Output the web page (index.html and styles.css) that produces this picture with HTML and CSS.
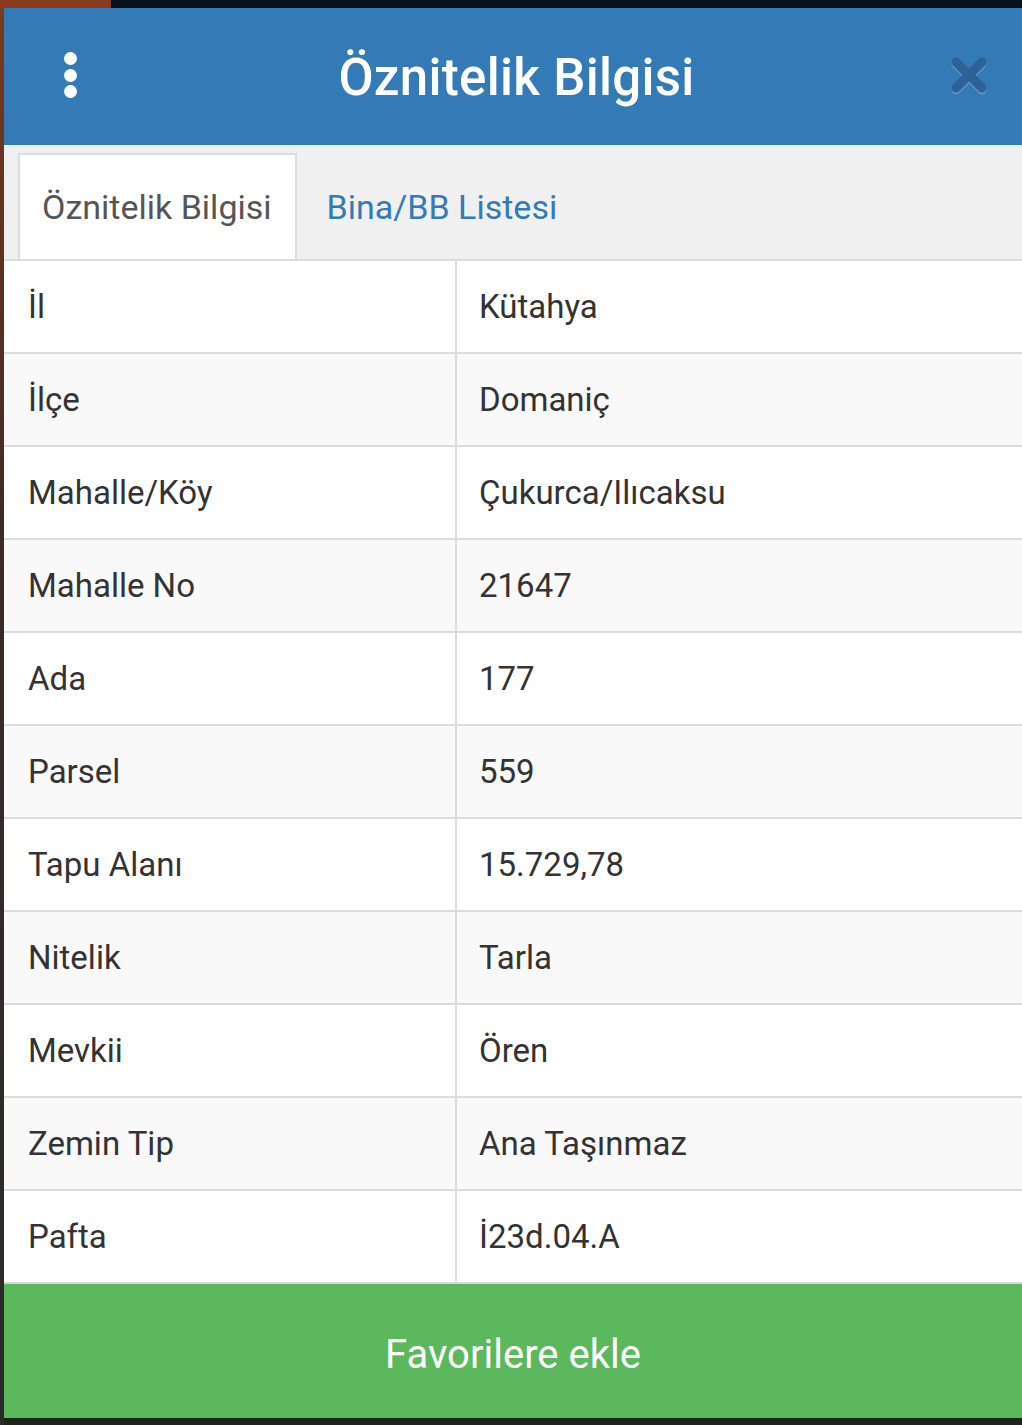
FILE: index.html
```html
<!DOCTYPE html>
<html lang="tr">
<head>
<meta charset="utf-8">
<title>Öznitelik Bilgisi</title>
<link rel="stylesheet" href="styles.css">
</head>
<body>
<div class="page">
  <div class="modal">
    <header class="modal-header">
      <div class="menu-dots"><span></span><span></span><span></span></div>
      <h1 class="modal-title">Öznitelik Bilgisi</h1>
      <svg class="close-icon" viewBox="0 0 40 40" width="40" height="40" aria-hidden="true">
        <g stroke="#5b93c9" stroke-width="9" stroke-linecap="round">
          <line x1="6" y1="8" x2="32" y2="34"/>
          <line x1="32" y1="8" x2="6" y2="34"/>
        </g>
        <g stroke="#2c6297" stroke-width="9" stroke-linecap="round">
          <line x1="6" y1="6" x2="32" y2="32"/>
          <line x1="32" y1="6" x2="6" y2="32"/>
        </g>
      </svg>
    </header>
    <nav class="tabs">
      <div class="tab active">Öznitelik Bilgisi</div>
      <div class="tab">Bina/BB Listesi</div>
    </nav>
    <div class="table">
      <div class="row"><div class="cell key">İl</div><div class="cell val">Kütahya</div></div>
      <div class="row"><div class="cell key">İlçe</div><div class="cell val">Domaniç</div></div>
      <div class="row"><div class="cell key">Mahalle/Köy</div><div class="cell val">Çukurca/Ilıcaksu</div></div>
      <div class="row"><div class="cell key">Mahalle No</div><div class="cell val">21647</div></div>
      <div class="row"><div class="cell key">Ada</div><div class="cell val">177</div></div>
      <div class="row"><div class="cell key">Parsel</div><div class="cell val">559</div></div>
      <div class="row"><div class="cell key">Tapu Alanı</div><div class="cell val">15.729,78</div></div>
      <div class="row"><div class="cell key">Nitelik</div><div class="cell val">Tarla</div></div>
      <div class="row"><div class="cell key">Mevkii</div><div class="cell val">Ören</div></div>
      <div class="row"><div class="cell key">Zemin Tip</div><div class="cell val">Ana Taşınmaz</div></div>
      <div class="row"><div class="cell key">Pafta</div><div class="cell val">İ23d.04.A</div></div>
    </div>
    <div class="footer-btn">Favorilere ekle</div>
  </div>
</div>
</body>
</html>
```
FILE: styles.css
```css
html, body {
  margin: 0;
  padding: 0;
}
body {
  width: 1022px;
  height: 1425px;
  overflow: hidden;
  background:
    linear-gradient(to right, #8b3b1b 0, #8b3b1b 111px, #06121c 111px) top left / 100% 8px no-repeat,
    linear-gradient(to bottom, #7a3a1e 0, #3a2a26 40%, #2a2a2a 100%) left / 4px 100% no-repeat,
    #1d2418;
  font-family: Roboto, "Noto Sans", "Liberation Sans", sans-serif;
}
.page {
  padding: 8px 0 0 4px;
}
.modal {
  width: 1018px;
  background: #fff;
}
.modal-header {
  height: 137px;
  background: #337ab7;
  display: flex;
  align-items: center;
}
.menu-dots {
  display: flex;
  flex-direction: column;
  gap: 3.5px;
  margin-left: 60px;
  margin-top: -3px;
}
.menu-dots span {
  width: 13px;
  height: 13px;
  border-radius: 50%;
  background: #fff;
}
.modal-title {
  flex: 1;
  margin: 0;
  text-align: center;
  color: #fff;
  font-size: 51px;
  font-weight: 500;
  letter-spacing: 0.3px;
  margin-left: 8px;
  margin-right: 2px;
  margin-top: 2px;
}
.close-icon {
  width: 40px;
  height: 40px;
  margin-right: 32px;
  margin-top: -1px;
}
.tabs {
  height: 114px;
  background: #f0f0f0;
  border-bottom: 2px solid #dcdcdc;
  display: flex;
  align-items: flex-end;
  padding-left: 14px;
}
.tab {
  height: 104px;
  display: flex;
  align-items: center;
  padding: 0 23px 0 22px;
  font-size: 34px;
  color: #337ab7;
  border: 2px solid transparent;
  border-bottom: none;
  margin-right: 6px;
}
.tab.active {
  background: #fff;
  color: #555;
  border-color: #dcdcdc;
}
.table {
  display: flex;
  flex-direction: column;
}
.row {
  display: flex;
  height: 91px;
  border-bottom: 2px solid #dcdcdc;
}
.row:nth-child(even) {
  background: #f9f9f9;
}
.row:last-child {
  border-bottom: none;
}
.cell {
  display: flex;
  align-items: center;
  font-size: 33px;
  color: #333;
}
.key {
  width: 453px;
  padding-left: 24px;
  box-sizing: border-box;
  border-right: 2px solid #dcdcdc;
}
.val {
  flex: 1;
  padding-left: 22px;
}
.footer-btn {
  height: 128px;
  padding-top: 6px;
  border-top: 2px solid #d8d8d8;
  background: #5cb85c;
  color: #fff;
  font-size: 40px;
  display: flex;
  align-items: center;
  justify-content: center;
}
```
